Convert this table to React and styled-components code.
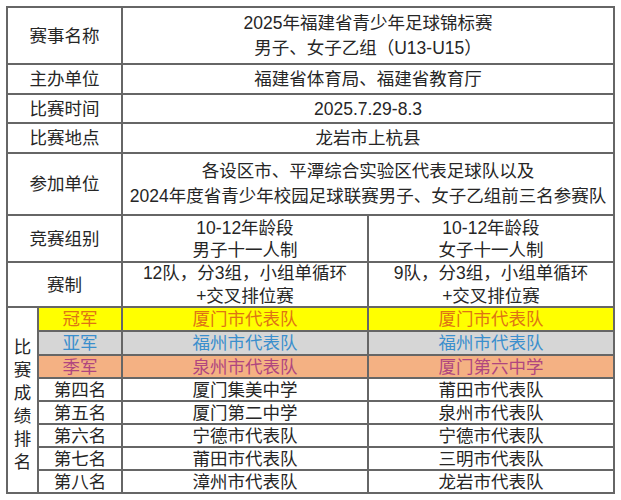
import React from "react";
import styled, { createGlobalStyle } from "styled-components";

const Global = createGlobalStyle`
  html, body { margin: 0; padding: 0; background: #ffffff; }
  body {
    font-family: "Liberation Sans", "Noto Sans CJK SC", sans-serif;
    color: #262626;
  }
`;

const Page = styled.div`
  width: 621px;
  height: 500px;
  padding: 6px 0 0 6px;
  box-sizing: border-box;
  background: #fff;
`;

const Grid = styled.div`
  display: grid;
  width: 609px;
  box-sizing: border-box;
  padding: 2px;
  gap: 2px;
  background: #666666;
  grid-template-columns: 29px 82px 244px 244px;
  grid-template-rows: 55px 28px 27px 28px 60px 45px 43px 22px 22px 21px 21px 21px 21px 21px 21px;
`;

const Cell = styled.div`
  background: ${(p) => p.$bg || "#ffffff"};
  color: ${(p) => p.$color || "#262626"};
  grid-column: ${(p) => p.$col || "auto"};
  grid-row: ${(p) => p.$row || "auto"};
  display: flex;
  align-items: center;
  justify-content: center;
  text-align: center;
  font-size: 17.5px;
  font-weight: 400;
  line-height: ${(p) => p.$lh || "22px"};
  white-space: pre-line;
  overflow: hidden;
`;

const Vertical = styled(Cell)`
  line-height: 23px;
  word-break: break-all;
  padding-top: 10px;
  box-sizing: border-box;
`;

const info = [
  { label: "赛事名称", value: "2025年福建省青少年足球锦标赛\n男子、女子乙组（U13-U15）", lh: "25px" },
  { label: "主办单位", value: "福建省体育局、福建省教育厅" },
  { label: "比赛时间", value: "2025.7.29-8.3" },
  { label: "比赛地点", value: "龙岩市上杭县" },
  { label: "参加单位", value: "各设区市、平潭综合实验区代表足球队以及\n2024年度省青少年校园足球联赛男子、女子乙组前三名参赛队", lh: "25px" },
];

const medals = {
  gold: { bg: "#ffff00", color: "#de7414" },
  silver: { bg: "#d6d6d6", color: "#3b8fcd" },
  bronze: { bg: "#f4b183", color: "#b0467f" },
};

const ranks = [
  { name: "冠军", boys: "厦门市代表队", girls: "厦门市代表队", medal: "gold" },
  { name: "亚军", boys: "福州市代表队", girls: "福州市代表队", medal: "silver" },
  { name: "季军", boys: "泉州市代表队", girls: "厦门第六中学", medal: "bronze" },
  { name: "第四名", boys: "厦门集美中学", girls: "莆田市代表队" },
  { name: "第五名", boys: "厦门第二中学", girls: "泉州市代表队" },
  { name: "第六名", boys: "宁德市代表队", girls: "宁德市代表队" },
  { name: "第七名", boys: "莆田市代表队", girls: "三明市代表队" },
  { name: "第八名", boys: "漳州市代表队", girls: "龙岩市代表队" },
];

export default function App() {
  return (
    <Page>
      <Global />
      <Grid>
        {info.map((r) => (
          <React.Fragment key={r.label}>
            <Cell $col="1 / 3">{r.label}</Cell>
            <Cell $col="3 / 5" $lh={r.lh}>{r.value}</Cell>
          </React.Fragment>
        ))}
        <Cell $col="1 / 3">竞赛组别</Cell>
        <Cell $lh="22px">{"10-12年龄段\n男子十一人制"}</Cell>
        <Cell $lh="22px">{"10-12年龄段\n女子十一人制"}</Cell>
        <Cell $col="1 / 3">赛制</Cell>
        <Cell $lh="23px">{"12队，分3组，小组单循环\n+交叉排位赛"}</Cell>
        <Cell $lh="23px">{"9队，分3组，小组单循环\n+交叉排位赛"}</Cell>
        <Vertical $col="1 / 2" $row="8 / 16">比赛成绩排名</Vertical>
        {ranks.map((r) => {
          const m = medals[r.medal] || {};
          return (
            <React.Fragment key={r.name}>
              <Cell $bg={m.bg} $color={m.color}>{r.name}</Cell>
              <Cell $bg={m.bg} $color={m.color}>{r.boys}</Cell>
              <Cell $bg={m.bg} $color={m.color}>{r.girls}</Cell>
            </React.Fragment>
          );
        })}
      </Grid>
    </Page>
  );
}
